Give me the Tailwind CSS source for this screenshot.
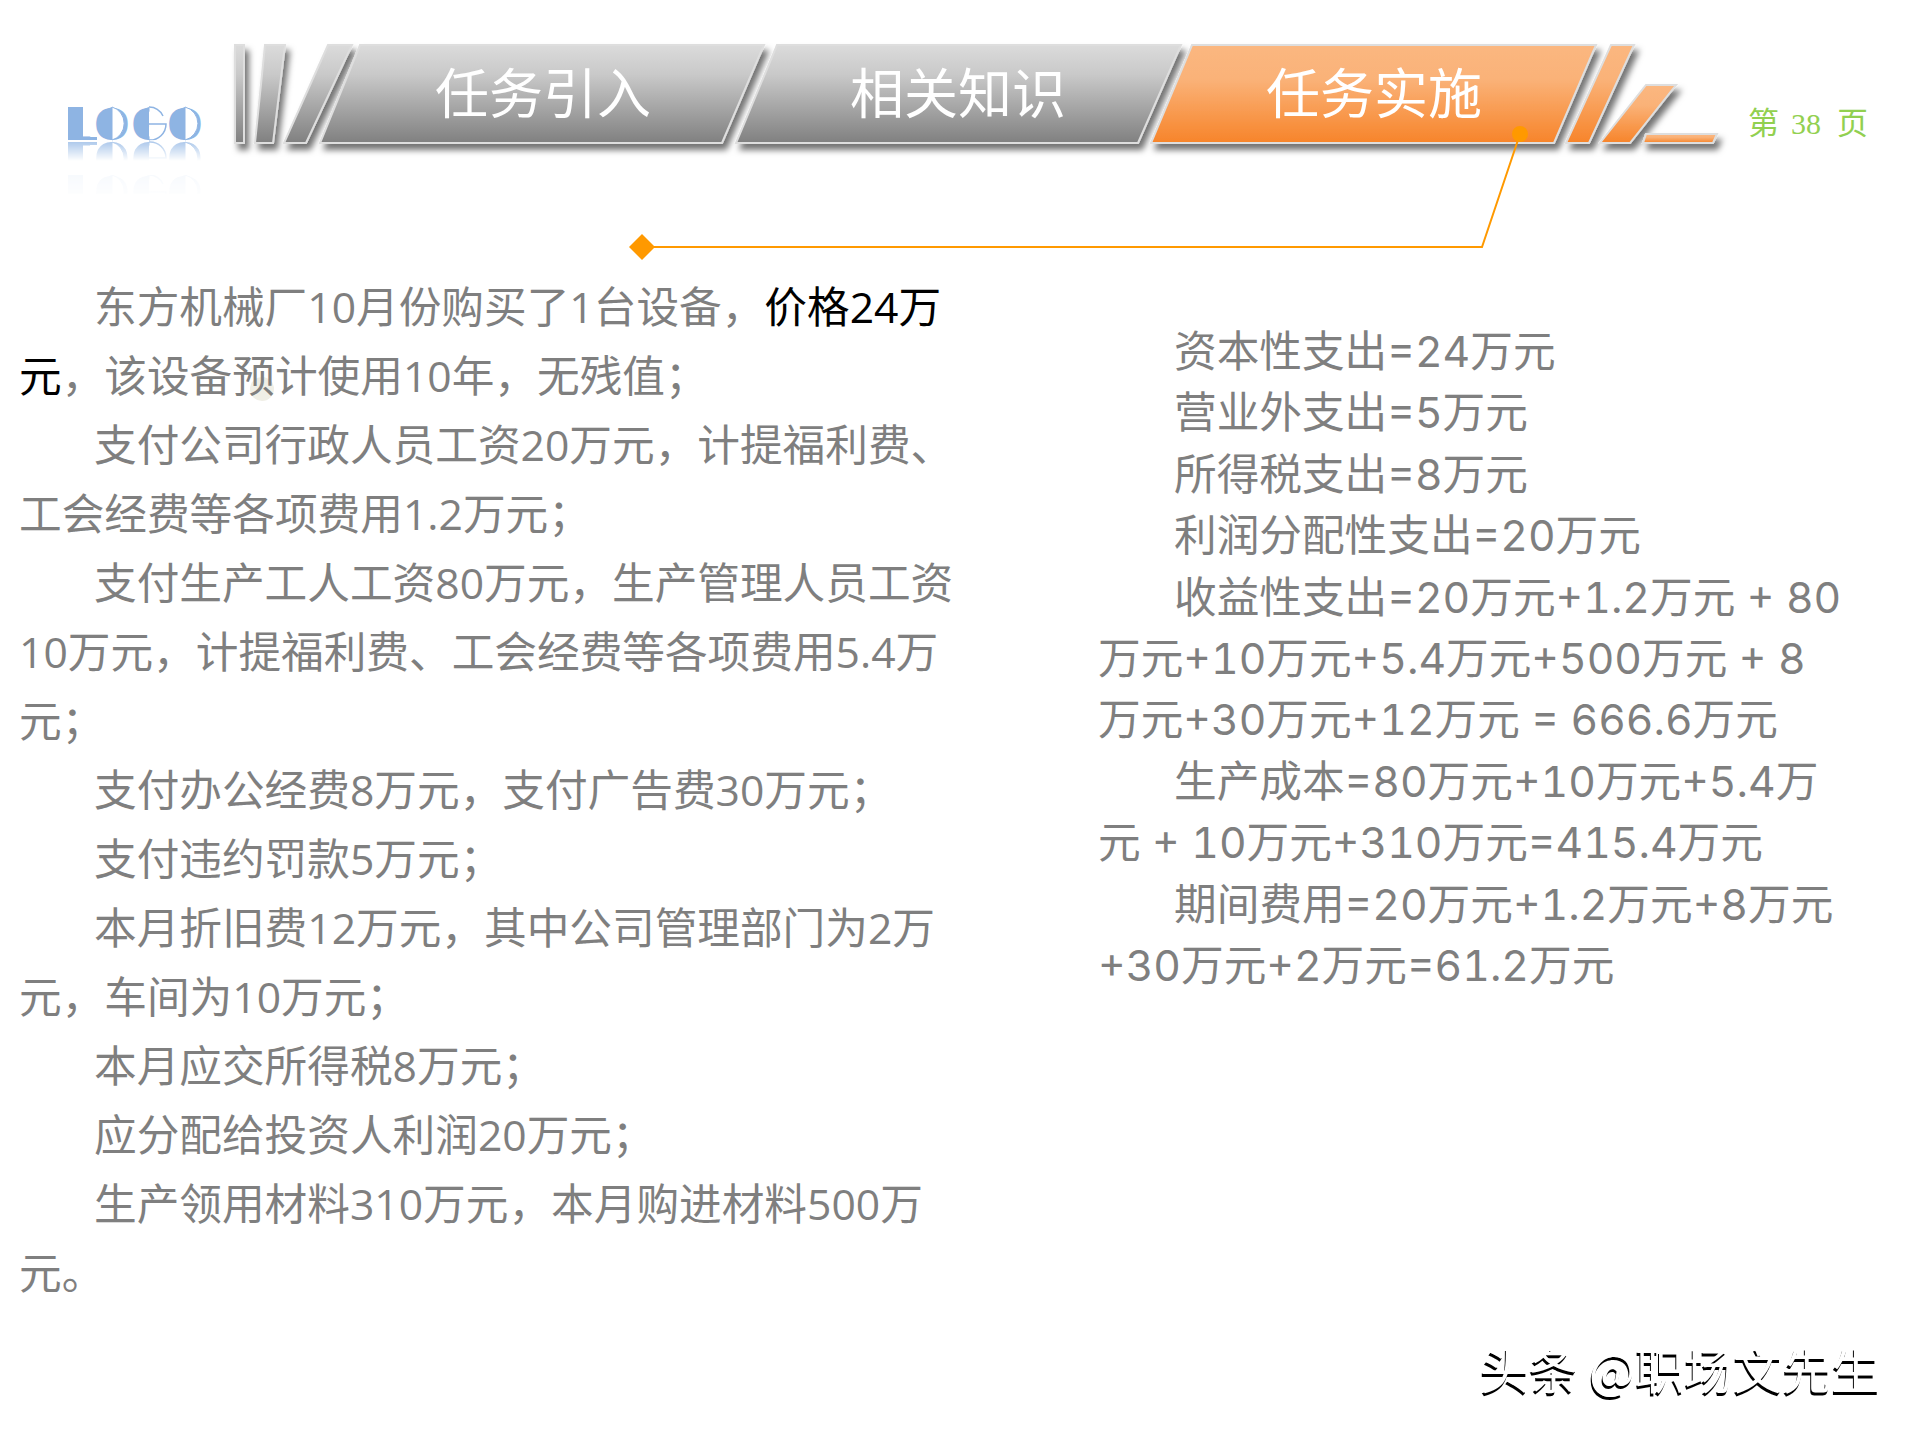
<!DOCTYPE html>
<html lang="zh-CN">
<head>
  <meta charset="UTF-8">
  <title>任务实施</title>
  <script src="https://cdn.jsdelivr.net/npm/@tailwindcss/browser@4"></script>
</head>
<body class="bg-white font-['Noto_Sans_CJK_SC',sans-serif] text-[#7f7f7f]">
  <div class="relative w-[1920px] h-[1440px] overflow-hidden">

    <!-- header strip -->
    <svg class="block w-[1920px] h-[272px]" viewBox="0 0 1920 272" xmlns="http://www.w3.org/2000/svg">
      <defs>
        <linearGradient id="gray" x1="0" y1="0" x2="0" y2="1">
          <stop offset="0" stop-color="#dbdbdb"/>
          <stop offset="0.3" stop-color="#c9c9c9"/>
          <stop offset="1" stop-color="#808080"/>
        </linearGradient>
        <linearGradient id="orange" x1="0" y1="0" x2="0" y2="1">
          <stop offset="0" stop-color="#fbb780"/>
          <stop offset="0.35" stop-color="#fab278"/>
          <stop offset="1" stop-color="#f7842a"/>
        </linearGradient>
        <linearGradient id="fade1" gradientUnits="userSpaceOnUse" x1="0" y1="141" x2="0" y2="161">
          <stop offset="0" stop-color="#fff" stop-opacity="0.75"/>
          <stop offset="1" stop-color="#fff" stop-opacity="0"/>
        </linearGradient>
        <linearGradient id="fade2" gradientUnits="userSpaceOnUse" x1="0" y1="175" x2="0" y2="194">
          <stop offset="0" stop-color="#fff" stop-opacity="0.07"/>
          <stop offset="1" stop-color="#fff" stop-opacity="0.02"/>
        </linearGradient>
        <mask id="m1" maskUnits="userSpaceOnUse" x="60" y="140" width="150" height="22"><rect x="60" y="140" width="150" height="22" fill="url(#fade1)"/></mask>
        <mask id="m2" maskUnits="userSpaceOnUse" x="60" y="175" width="150" height="19"><rect x="60" y="175" width="150" height="19" fill="url(#fade2)"/></mask>
        <filter id="shadow" x="-20%" y="-20%" width="150%" height="160%">
          <feDropShadow dx="4" dy="6" stdDeviation="3" flood-color="#000" flood-opacity="0.55"/>
        </filter>
        <g id="logo" class="font-['Liberation_Sans']" font-size="46" fill="#8eb4e3">
          <text x="66" y="140">L</text>
          <text x="94" y="140">O</text>
          <text x="131" y="140">G</text>
          <text x="167" y="140">O</text>
          <!-- half filled letter bodies -->
          <path d="M68 107h15v30h14v3h-29z"/>
          <path d="M112 107a17 17 0 0 0 0 33z"/>
          <path d="M149 107a17 17 0 0 0 0 33z"/>
          <path d="M185 107a17 17 0 0 0 0 33z"/>
          <path d="M112 107a16 17 0 0 1 0 33zM185 107a17 17 0 0 1 0 33z" fill="#fff" stroke="#8eb4e3" stroke-width="1"/>
          <rect x="149.5" y="105" width="19" height="37" fill="#fff"/>
          <path d="M149 107a16 17 0 0 1 14 9M149 124h17a16 16 0 0 1-17 16" fill="none" stroke="#8eb4e3" stroke-width="1.5"/>
        </g>
      </defs>

      <use href="#logo"/>
      <g mask="url(#m1)"><use href="#logo" transform="matrix(1 0 0 -1 0 282)"/></g>
      <g mask="url(#m2)"><use href="#logo" transform="translate(0 68)"/></g>

      <g filter="url(#shadow)" stroke="#dedede" stroke-width="2">
        <polygon points="235,45 244,45 244,143 235,143" fill="url(#gray)"/>
        <polygon points="265,45 285,45 273,143 255,143" fill="url(#gray)"/>
        <polygon points="328,45 352,45 306,143 284,143" fill="url(#gray)"/>
        <polygon points="360,45 764,45 722,143 320,143" fill="url(#gray)"/>
        <polygon points="777,45 1181,45 1138,143 736,143" fill="url(#gray)"/>
        <polygon points="1192,45 1596,45 1554,143 1151,143" fill="url(#orange)"/>
        <polygon points="1611,45 1634,45 1589,143 1566,143" fill="url(#orange)"/>
        <polygon points="1646,85 1676,85 1630,143 1600,143" fill="url(#orange)"/>
        <polygon points="1646,134 1717,134 1713,143 1643,143" fill="url(#orange)"/>
      </g>

      <text x="435" y="114" font-size="54" fill="#fff">任务引入</text>
      <text x="850" y="114" font-size="54" fill="#fff">相关知识</text>
      <text x="1266" y="114" font-size="54" fill="#fff">任务实施</text>

      <text x="1748" y="134" font-size="31" fill="#92d050">第</text>
      <text x="1791" y="134" font-size="30" fill="#92d050" class="font-['Liberation_Serif']">38</text>
      <text x="1837" y="134" font-size="31" fill="#92d050">页</text>

      <polyline points="1520,134 1482,247 642,247" fill="none" stroke="#ff9900" stroke-width="2"/>
      <circle cx="1520" cy="134" r="8" fill="#ff9900"/>
      <polygon points="642,234 655,247 642,260 629,247" fill="#ff9900"/>
    </svg>

    <!-- body text -->
    <div class="flex text-[42.67px]">
      <div class="relative w-[1098px] pl-[19px] leading-[69px] whitespace-nowrap font-['Open_Sans','Noto_Sans_CJK_SC',sans-serif]">
        <span class="absolute left-[250px] top-[105px] w-[24px] h-[24px] rounded-full bg-[#f0efe6]"></span>
        <p class="relative indent-[75px]">东方机械厂10月份购买了1台设备，<span class="text-black">价格24万</span></p>
        <p class="relative"><span class="text-black">元</span>，该设备预计使用10年，无残值；</p>
        <p class="indent-[75px]">支付公司行政人员工资20万元，计提福利费、</p>
        <p>工会经费等各项费用1.2万元；</p>
        <p class="indent-[75px]">支付生产工人工资80万元，生产管理人员工资</p>
        <p>10万元，计提福利费、工会经费等各项费用5.4万</p>
        <p>元；</p>
        <p class="indent-[75px]">支付办公经费8万元，支付广告费30万元；</p>
        <p class="indent-[75px]">支付违约罚款5万元；</p>
        <p class="indent-[75px]">本月折旧费12万元，其中公司管理部门为2万</p>
        <p>元，车间为10万元；</p>
        <p class="indent-[75px]">本月应交所得税8万元；</p>
        <p class="indent-[75px]">应分配给投资人利润20万元；</p>
        <p class="indent-[75px]">生产领用材料310万元，本月购进材料500万</p>
        <p>元。</p>
      </div>
      <div class="flex-1 pt-[49px] leading-[61.4px] whitespace-nowrap tabular-nums font-['Inter','Noto_Sans_CJK_SC',sans-serif]">
        <p class="indent-[76px]">资本性支出=24万元</p>
        <p class="indent-[76px]">营业外支出=5万元</p>
        <p class="indent-[76px]">所得税支出=8万元</p>
        <p class="indent-[76px]">利润分配性支出=20万元</p>
        <p class="indent-[76px]">收益性支出=20万元+1.2万元 + 80</p>
        <p>万元+10万元+5.4万元+500万元 + 8</p>
        <p>万元+30万元+12万元 = 666.6万元</p>
        <p class="indent-[76px]">生产成本=80万元+10万元+5.4万</p>
        <p>元 + 10万元+310万元=415.4万元</p>
        <p class="indent-[76px]">期间费用=20万元+1.2万元+8万元</p>
        <p>+30万元+2万元=61.2万元</p>
      </div>
    </div>

    <!-- watermark -->
    <div class="absolute left-[1480px] top-[1335px] text-[49px] leading-[66px] whitespace-nowrap text-white [text-shadow:-1px_3px_0_#000]">头条 @职场文先生</div>
  </div>
</body>
</html>
